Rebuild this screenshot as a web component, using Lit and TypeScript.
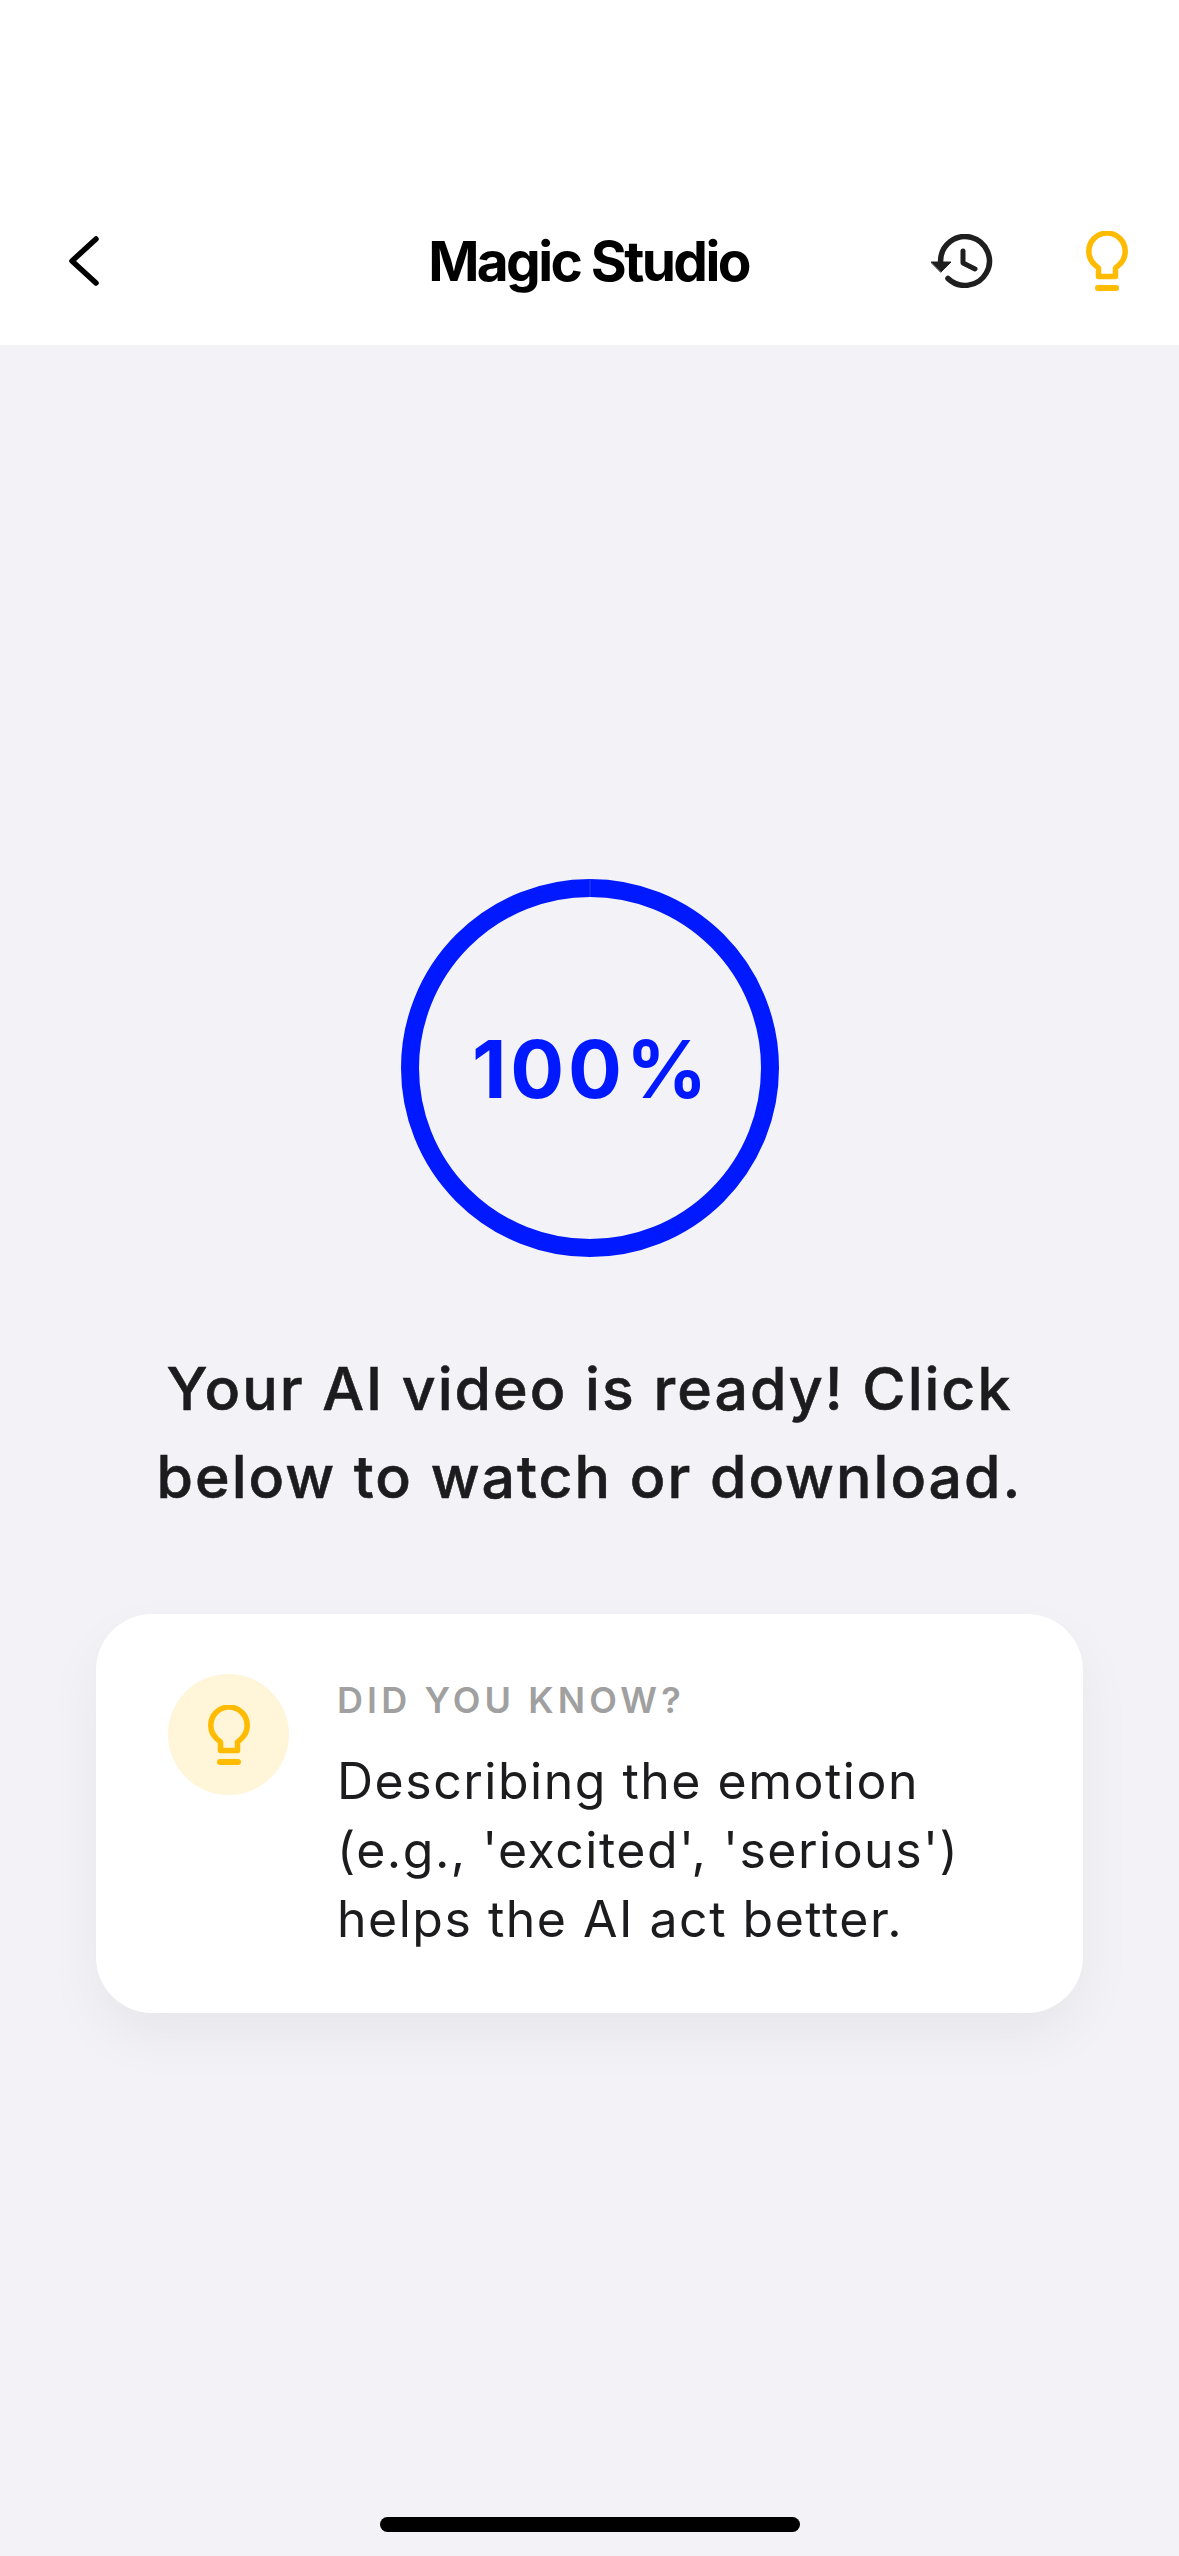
import { LitElement, html, css } from "lit";
import { customElement } from "lit/decorators.js";

const bulb = (cls: string) => html`<svg class=${cls} viewBox="0 0 42 60" fill="none" stroke="#FFBB00" stroke-width="5.5" stroke-linejoin="round">
  <path d="M12.5 45.5 H29.5 V37 L33.5 33.5 A18.2 18.2 0 1 0 8.5 33.5 L12.5 37 Z"/>
  <path d="M12 57 H30" stroke-width="6" stroke-linecap="round"/>
</svg>`;

@customElement("app-root")
export class AppRoot extends LitElement {
  static styles = css`
    :host { display: block; width: 1179px; height: 2556px; position: relative; overflow: hidden; background: #f2f2f7; font-family: Inter, "Liberation Sans", sans-serif; color: #1c1c1e; }
    .header { height: 345px; box-sizing: border-box; padding-top: 231px; background: #fff; position: relative; display: flex; align-items: flex-start; justify-content: space-between; }
    .back { width: 30px; height: 50px; margin: 5px 0 0 69px; }
    .title { position: absolute; left: 0; right: 2px; top: 226px; text-align: center; font-size: 55px; line-height: 70px; font-weight: 700; letter-spacing: -2.6px; color: #000; }
    .actions { display: flex; align-items: flex-start; gap: 93px; margin-right: 51px; }
    .hist { width: 62px; height: 54px; margin-top: 3px; }
    .top-bulb { width: 42px; height: 60px; }
    .main { display: flex; flex-direction: column; align-items: center; padding-top: 534px; }
    .ring { width: 378px; height: 378px; position: relative; display: flex; align-items: center; justify-content: center; }
    .ring svg { position: absolute; inset: 0; width: 100%; height: 100%; }
    .pct { font-size: 80px; line-height: 97px; font-weight: 700; color: #0019ff; letter-spacing: 3.9px; margin-right: -4px; }
    .msg { margin: 88px 0 0; width: 1000px; text-align: center; font-size: 59px; line-height: 88px; font-weight: 500; letter-spacing: 2px; color: #1c1c1e; -webkit-text-stroke: 0.6px #1c1c1e; }
    .card { margin-top: 93px; width: 987px; height: 399px; box-sizing: border-box; padding: 60px 72px 0 72px; background: #fff; border-radius: 56px; display: flex; gap: 48px; box-shadow: 0 24px 56px rgba(0, 0, 0, 0.05); }
    .tip-ic { width: 121px; height: 121px; flex: none; border-radius: 50%; background: #fff5d9; display: flex; align-items: center; justify-content: center; }
    .tip-bulb { width: 42px; height: 60px; }
    .label { font-size: 36px; line-height: 44px; margin-top: 4px; font-weight: 600; letter-spacing: 4.1px; color: #a0a0a0; }
    .body { margin-top: 25px; font-size: 50px; line-height: 69px; letter-spacing: 1.5px; color: #1c1c1e; white-space: nowrap; }
    .home { position: absolute; left: 380px; top: 2517px; width: 420px; height: 15px; border-radius: 8px; background: #000; }
  `;

  render() {
    return html`
      <div class="header">
        <svg class="back" viewBox="0 0 30 50" fill="none" stroke="#000" stroke-width="5.5" stroke-linecap="round" stroke-linejoin="round"><path d="M27 3 L3 25 L27 47"/></svg>
        <div class="title">Magic Studio</div>
        <div class="actions">
          <svg class="hist" viewBox="0 0 62 54" fill="none" stroke="#1f1f1f" stroke-width="5.5" stroke-linecap="round" stroke-linejoin="round">
            <path d="M9.6 27 A24.4 24.4 0 1 1 17 44.5"/>
            <path d="M0 28 H20 L10 38 Z" fill="#1f1f1f" stroke="#1f1f1f" stroke-width="1"/>
            <path d="M32 17 V29 L44 35" stroke-width="5"/>
          </svg>
          ${bulb("top-bulb")}
        </div>
      </div>
      <div class="main">
        <div class="ring">
          <svg viewBox="0 0 378 378" fill="none"><circle cx="189" cy="189" r="180" stroke="#0019ff" stroke-width="18"/><path d="M189 0 V18" stroke="#4a5bff" stroke-width="0.6"/></svg>
          <div class="pct">100%</div>
        </div>
        <p class="msg">Your AI video is ready! Click<br />below to watch or download.</p>
        <div class="card">
          <div class="tip-ic">${bulb("tip-bulb")}</div>
          <div>
            <div class="label">DID YOU KNOW?</div>
            <div class="body">Describing the emotion<br />(e.g., 'excited', 'serious')<br />helps the AI act better.</div>
          </div>
        </div>
      </div>
      <div class="home"></div>
    `;
  }
}
